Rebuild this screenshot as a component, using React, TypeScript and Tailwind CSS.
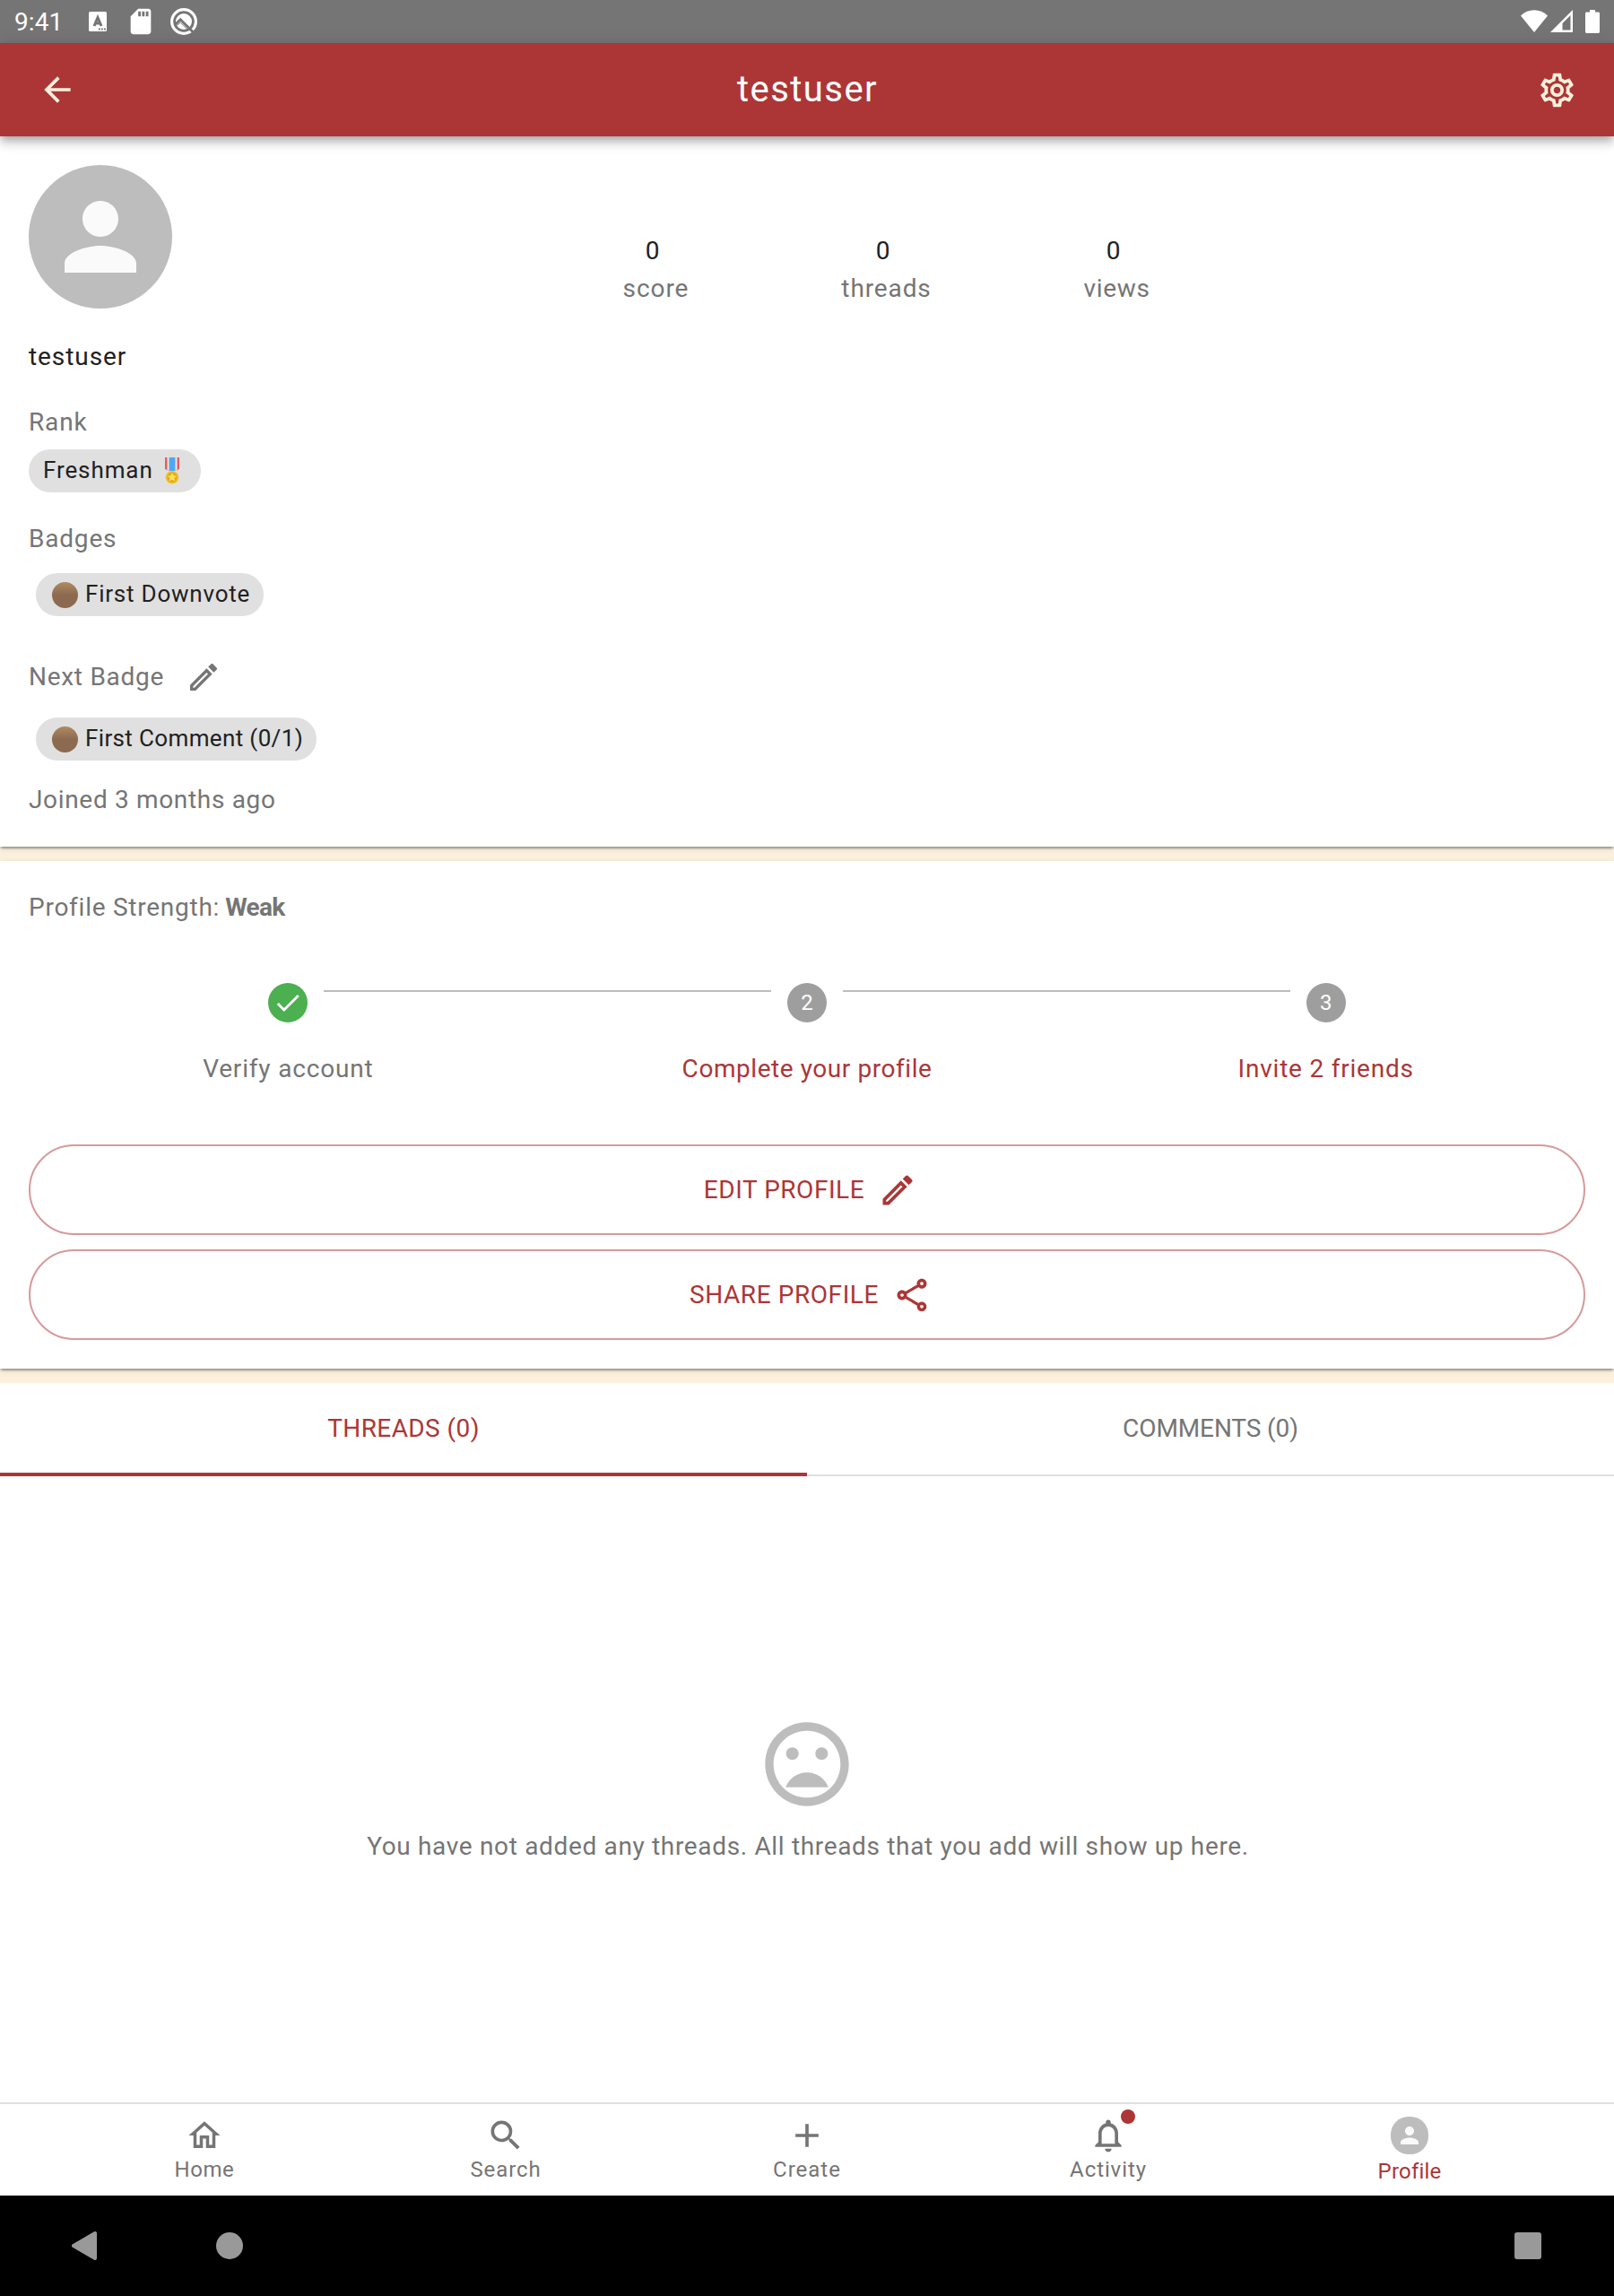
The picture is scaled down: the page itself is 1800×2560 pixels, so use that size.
import React from "react";
import {
  MdAdd,
  MdArrowBack,
  MdCheck,
  MdMoodBad,
  MdNotificationsNone,
  MdOutlineEdit,
  MdOutlineHome,
  MdOutlineSettings,
  MdOutlineShare,
  MdPerson,
  MdSdCard,
  MdSearch,
} from "react-icons/md";

function StatusBar() {
  return (
    <div className="flex h-12 shrink-0 items-center justify-between bg-[#757575] pr-4 pl-4 text-white">
      <div className="flex items-center">
        <span className="w-[83px] pt-0.5 text-[28px] leading-8 tracking-[0.1px]">9:41</span>
        <svg width="20" height="22" viewBox="0 0 20 22">
          <rect width="20" height="22" rx="1.5" fill="#fff" />
          <path d="M6 16 10 6.500 14 16M7.500 13h5" fill="none" stroke="#757575" strokeWidth="3" />
          <path d="M11 19.5h1.8M14 19.5h1.8M17 19.5h1.8" stroke="#757575" strokeWidth="1.8" />
        </svg>
        <MdSdCard className="ml-[21px] size-[34px]" />
        <svg className="ml-4" width="30" height="30" viewBox="0 0 30 30">
          <circle cx="15" cy="15" r="13.4" fill="none" stroke="#fff" strokeWidth="3.2" />
          <circle cx="15" cy="15" r="9" fill="#fff" />
          <path d="M5.5 18.5 11.2 12.8 27 28.5" fill="none" stroke="#757575" strokeWidth="3" />
          <path d="M8 19.2 11.2 16 20 24.6" fill="none" stroke="#757575" strokeWidth="1" />
        </svg>
      </div>
      <div className="flex items-center">
        <svg width="30" height="26" viewBox="0 0 30 26">
          <path d="M0 6.5C4 2.300 9.500.2 15 .2S26 2.300 30 6.500L15 25z" fill="#fff" />
        </svg>
        <svg className="ml-[3px]" width="25" height="26" viewBox="0 0 25 26">
          <path d="M25 0v25H0zM22.500 6 13.500 15v7.500h9z" fill="#fff" fillRule="evenodd" />
        </svg>
        <svg className="ml-3.5" width="16" height="26" viewBox="0 0 16 26">
          <path d="M5 0h6v2.500h3.500c.8 0 1.500.7 1.500 1.500v20.500c0 .8-.7 1.500-1.500 1.500h-13C.7 26 0 25.300 0 24.500V4c0-.8.7-1.500 1.500-1.500H5z" fill="#fff" />
        </svg>
      </div>
    </div>
  );
}

function AppBar() {
  return (
    <header className="relative z-10 flex h-[104px] shrink-0 items-center justify-between bg-[#ac3636] pr-[41px] pl-[42px] text-[#faf0dc] shadow-[0_4px_8px_-2px_rgba(0,0,0,0.2),0_8px_10px_0_rgba(0,0,0,0.14),0_2px_20px_0_rgba(0,0,0,0.12)]">
      <MdArrowBack className="size-[44px]" />
      <h1 className="pl-px text-[40px] leading-[48px] tracking-[1.45px] text-white">testuser</h1>
      <MdOutlineSettings className="size-[45px]" />
    </header>
  );
}

function Stat({ value, label, labelClass }: { value: string; label: string; labelClass: string }) {
  return (
    <div className="flex w-[257px] flex-col items-center">
      <span className="mr-2 leading-8">{value}</span>
      <span className={`mt-2.5 leading-8 text-[#757575] ${labelClass}`}>{label}</span>
    </div>
  );
}

function Medal() {
  return (
    <svg width="18" height="30" viewBox="0 0 18 30">
      <path d="M1 0h4v15L1 13z" fill="#e0605e" />
      <path d="M13 0h4v13l-4 2z" fill="#e0605e" />
      <path d="M3.500 0h2v15l-2-1zM12.500 0h2v14l-2 1z" fill="#f1e6e6" />
      <path d="M5.500 0h7v15h-7z" fill="#4fa9f0" />
      <circle cx="9" cy="22.200" r="7.300" fill="#f0c02e" />
      <circle cx="9" cy="22.200" r="5.600" fill="#e3aa20" />
      <path d="m9 17 1.500 3.300 3.600.4-2.700 2.400.8 3.500L9 24.800l-3.200 1.800.8-3.500-2.700-2.400 3.600-.4z" fill="#fde258" />
    </svg>
  );
}

function BadgeChip({ children, className }: { children: React.ReactNode; className: string }) {
  return (
    <div className={`ml-2 flex h-12 items-center rounded-full bg-[#e0e0e0] pl-[18px] text-[26px] leading-8 text-[#212121] ${className}`}>
      <span className="mr-2 size-[29px] rounded-full bg-linear-to-b from-[#b08a62] via-[#8c6a50] to-[#8b6a51]" />
      <span className="pb-0.5">{children}</span>
    </div>
  );
}

const cardShadow =
  "shadow-[0_4px_2px_-2px_rgba(0,0,0,0.2),0_2px_2px_0_rgba(0,0,0,0.14),0_2px_6px_0_rgba(0,0,0,0.12)]";

function ProfileCard() {
  return (
    <section className={`flex h-[792px] shrink-0 flex-col items-start bg-white pt-8 pl-8 leading-8 text-[#757575] ${cardShadow}`}>
      <div className="flex h-40 text-[#212121]">
        <div className="flex size-40 items-center justify-center rounded-full bg-[#bdbdbd] text-[#fafafa]">
          <MdPerson className="size-[120px]" />
        </div>
        <div className="ml-[411px] flex pt-20">
          <Stat value="0" label="score" labelClass="tracking-[0.92px]" />
          <Stat value="0" label="threads" labelClass="tracking-[0.88px]" />
          <Stat value="0" label="views" labelClass="tracking-[0.7px]" />
        </div>
      </div>
      <div className="mt-[38px] tracking-[0.92px] text-[#212121]">testuser</div>
      <div className="mt-[41px] tracking-[0.85px]">Rank</div>
      <div className="mt-3.5 flex h-12 w-48 items-center rounded-full bg-[#e0e0e0] pl-4 text-[26px] tracking-[0.9px] text-[#212121]">
        <span className="w-[135px] pb-0.5">Freshman</span>
        <Medal />
      </div>
      <div className="mt-9 tracking-[0.8px]">Badges</div>
      <BadgeChip className="mt-[22px] w-[254px] tracking-[0.78px]">First Downvote</BadgeChip>
      <div className="mt-12 flex h-10 items-center">
        <span className="w-[175px] tracking-[0.72px]">Next Badge</span>
        <MdOutlineEdit className="size-10" />
      </div>
      <BadgeChip className="mt-[25px] w-[313px] tracking-[0.36px]">First Comment (0/1)</BadgeChip>
      <div className="mt-7 tracking-[0.67px]">Joined 3 months ago</div>
    </section>
  );
}

function Step({ marker, label, className, done }: { marker: React.ReactNode; label: string; className: string; done?: boolean }) {
  return (
    <div className="flex flex-1 flex-col items-center">
      <div className={`flex size-[44px] items-center justify-center rounded-full text-2xl text-white ${done ? "bg-[#4caf50]" : "bg-[#9e9e9e]"}`}>
        {marker}
      </div>
      <div className={`mt-9 leading-8 ${className}`}>{label}</div>
    </div>
  );
}

function StrengthCard() {
  return (
    <section className={`flex h-[566px] shrink-0 flex-col bg-white px-8 pt-9 leading-8 text-[#757575] ${cardShadow}`}>
      <div className="flex">
        <span className="tracking-[0.75px]">Profile Strength:</span>
        <span className="ml-[6px] font-bold tracking-[-0.7px]">Weak</span>
      </div>
      <div className="relative mt-[68px] flex">
        <Step done marker={<MdCheck className="size-[34px]" />} label="Verify account" className="tracking-[0.82px]" />
        <Step marker="2" label="Complete your profile" className="tracking-[0.56px] text-[#ac3636]" />
        <Step marker="3" label="Invite 2 friends" className="tracking-[0.78px] text-[#ac3636]" />
        <div className="absolute top-2 right-[329px] left-[329px] flex justify-between">
          <div className="h-0.5 w-[499px] bg-[#bdbdbd]" />
          <div className="h-0.5 w-[499px] bg-[#bdbdbd]" />
        </div>
      </div>
      <button className="mt-[68px] flex h-[101px] items-center justify-center rounded-full border-2 border-[#d7999b] pl-2 text-[#ac3636]">
        <span className="tracking-[0.54px]">EDIT PROFILE</span>
        <MdOutlineEdit className="ml-[15px] size-[44px]" />
      </button>
      <button className="mt-4 flex h-[101px] items-center justify-center rounded-full border-2 border-[#d7999b] pl-2 text-[#ac3636]">
        <span className="tracking-[0.58px]">SHARE PROFILE</span>
        <MdOutlineShare className="ml-[15px] size-[44px]" />
      </button>
    </section>
  );
}

function Tabs() {
  return (
    <div className="flex h-[104px] shrink-0 bg-white leading-8">
      <div className="flex flex-1 items-center justify-center border-b-4 border-[#ac3636] pt-0.5 tracking-[0.41px] text-[#ac3636]">
        THREADS (0)
      </div>
      <div className="flex flex-1 items-center justify-center border-b-2 border-[#e0e0e0] tracking-[-0.1px] text-[#757575]">
        COMMENTS (0)
      </div>
    </div>
  );
}

function EmptyState() {
  return (
    <div className="flex flex-1 flex-col items-center bg-white pt-[265px] text-[#757575]">
      <MdMoodBad className="size-28 text-[#bdbdbd]" />
      <p className="mt-5 pl-0.5 leading-8 tracking-[0.66px]">
        You have not added any threads. All threads that you add will show up here.
      </p>
    </div>
  );
}

function NavItem({ icon, label, className }: { icon: React.ReactNode; label: string; className: string }) {
  return (
    <div className="flex flex-1 flex-col items-center">
      <div className="relative flex h-[44px] items-center">{icon}</div>
      <span className={`text-2xl leading-7 ${className}`}>{label}</span>
    </div>
  );
}

function BottomNav() {
  return (
    <nav className="flex h-[104px] shrink-0 border-t-2 border-[#e0e0e0] bg-white px-[60px] pt-[13px] text-[#757575]">
      <NavItem icon={<MdOutlineHome className="size-[42px]" />} label="Home" className="mt-0.5 tracking-[0.55px]" />
      <NavItem icon={<MdSearch className="size-[44px]" />} label="Search" className="mt-0.5 tracking-[0.9px]" />
      <NavItem icon={<MdAdd className="size-[44px]" />} label="Create" className="mt-0.5 tracking-[1px]" />
      <NavItem
        icon={
          <>
            <MdNotificationsNone className="size-[44px]" />
            <span className="absolute -top-[7px] -right-2 size-4 rounded-full bg-[#ac3636]" />
          </>
        }
        label="Activity"
        className="mt-0.5 tracking-[0.9px]"
      />
      <NavItem
        icon={
          <div className="flex size-[42px] items-center justify-center rounded-[20px] bg-[#bdbdbd] text-[#fafafa]">
            <MdPerson className="size-[30px]" />
          </div>
        }
        label="Profile"
        className="mt-1 tracking-[0.2px] text-[#ac3636]"
      />
    </nav>
  );
}

function SystemNav() {
  return (
    <div className="flex h-28 shrink-0 items-center bg-black pr-[81px] pl-20">
      <svg width="28" height="34" viewBox="0 0 28 34">
        <path d="M2 17 26 3v28z" fill="#999" stroke="#999" strokeWidth="4" strokeLinejoin="round" />
      </svg>
      <span className="ml-[133px] size-[30px] rounded-full bg-[#999]" />
      <span className="ml-auto size-[30px] rounded-[3px] bg-[#999]" />
    </div>
  );
}

export default function App() {
  return (
    <div className="flex h-[2560px] w-[1800px] flex-col overflow-hidden bg-[#faf0dc] font-['Roboto',sans-serif] text-[28px]">
      <StatusBar />
      <AppBar />
      <ProfileCard />
      <div className="h-4 shrink-0" />
      <StrengthCard />
      <div className="h-4 shrink-0" />
      <Tabs />
      <EmptyState />
      <BottomNav />
      <SystemNav />
    </div>
  );
}
